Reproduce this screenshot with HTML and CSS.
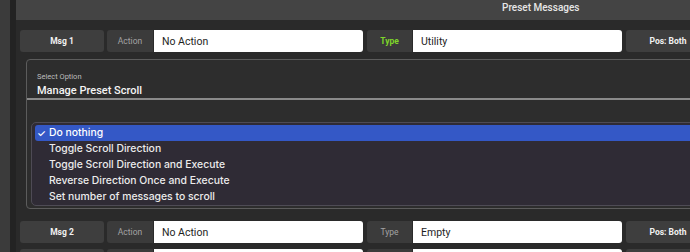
FILE: index.html
```html
<!DOCTYPE html>
<html lang="en">
<head>
  <meta charset="UTF-8">
  <meta name="viewport" content="width=device-width, initial-scale=1.0">
  <title>Preset Messages</title>
  <link rel="stylesheet" href="styles.css">
</head>
<body>

  <div class="sidebar"></div>
  <div class="divider"></div>

  <div class="main">
    <div class="header">Preset Messages</div>

    <div class="row">
      <div class="msg">Msg 1</div>
      <div class="label">Action</div>
      <div class="field">No Action</div>
      <div class="label type-active">Type</div>
      <div class="field">Utility</div>
      <div class="pos">Pos: Both</div>
    </div>

    <div class="panel">
      <div class="select">
        <div class="select-label">Select Option</div>
        <div class="select-value">Manage Preset Scroll</div>
      </div>

      <ul class="menu">
        <li class="selected"><span class="check">✓</span>Do nothing</li>
        <li>Toggle Scroll Direction</li>
        <li>Toggle Scroll Direction and Execute</li>
        <li>Reverse Direction Once and Execute</li>
        <li>Set number of messages to scroll</li>
      </ul>
    </div>

    <div class="row row-after">
      <div class="msg">Msg 2</div>
      <div class="label">Action</div>
      <div class="field">No Action</div>
      <div class="label">Type</div>
      <div class="field">Empty</div>
      <div class="pos">Pos: Both</div>
    </div>

    <!-- próxima linha, só o topo aparece -->
    <div class="row row-next">
      <div class="msg"></div>
      <div class="label"></div>
      <div class="field"></div>
      <div class="label"></div>
      <div class="field"></div>
      <div class="pos"></div>
    </div>
  </div>

</body>
</html>
```

FILE: styles.css
```css
body {
  margin: 0;
  height: 252px;
  display: flex;
  overflow: hidden;
  background-color: #2a2a2a;
  font-family: Roboto, "Liberation Sans", sans-serif;
  color: #fff;
}

.sidebar {
  width: 10px;
  flex-shrink: 0;
  background-color: #3b3b3b;
}

.divider {
  width: 6px;
  flex-shrink: 0;
  background-color: #232323;
}

.main {
  flex: 1;
  min-width: 0;
  overflow: hidden;
}

.header {
  height: 20px;
  box-sizing: border-box;
  padding: 2px 0 0 486px;
  background-color: #444;
  color: #e6e6e6;
  font-size: 10px;
  font-weight: 500;
  white-space: nowrap;
}

/* linha de mensagem */
.row {
  display: flex;
  height: 22px;
  margin: 10px 0 0 4px;
  white-space: nowrap;
}

.row-after {
  margin-top: 12px;
}

.row-next {
  margin-top: 6px;
}

.msg, .pos {
  width: 84px;
  flex-shrink: 0;
  display: flex;
  align-items: center;
  justify-content: center;
  background-color: #3e3e3e;
  border-radius: 3px;
  font-size: 8.5px;
  font-weight: 700;
  color: #f2f2f2;
}

.msg {
  margin-right: 3px;
}

.pos {
  margin-left: 4px;
}

.label {
  width: 46px;
  flex-shrink: 0;
  display: flex;
  align-items: center;
  justify-content: center;
  background-color: #3b3b3b;
  border-radius: 3px 0 0 3px;
  font-size: 8.5px;
  color: #a3a3a3;
  margin-right: 1px;
}

.label.type-active {
  color: #7fd62a;
  font-weight: 700;
}

.row .label:nth-child(4) {
  width: 45px;
  margin-left: 4px;
}

.field {
  width: 201px;
  flex-shrink: 0;
  display: flex;
  align-items: center;
  padding-left: 8px;
  background-color: #fff;
  border-radius: 0 3px 3px 0;
  color: #1e1e1e;
  font-size: 10.5px;
}

/* painel do select */
.panel {
  margin: 7px 0 0 10px;
  width: 700px;
  height: 150px;
  box-sizing: border-box;
  background-color: #2d2d2d;
  border: 1px solid #5c5c5c;
  border-radius: 4px;
}

.select {
  padding: 12px 0 0 10px;
  height: 40px;
  box-sizing: border-box;
  border-bottom: 2px solid #8a8a8a;
}

.select-label {
  font-size: 7.5px;
  color: #bdbdbd;
  line-height: 9px;
}

.select-value {
  font-size: 11px;
  font-weight: 500;
  color: #f4f4f4;
  margin-top: 3px;
  line-height: 13px;
}

.menu {
  list-style: none;
  margin: 22px 0 0 4px;
  padding: 2px 3px;
  height: 84px;
  box-sizing: border-box;
  background-color: #2f2b35;
  border: 1px solid #4e4b55;
  border-radius: 5px;
  font-family: Inter, "Noto Sans", sans-serif;
  font-size: 10.4px;
  font-weight: 500;
  color: #ececec;
}

.menu li {
  height: 16px;
  line-height: 16px;
  padding-left: 14px;
  border-radius: 3px;
  position: relative;
  white-space: nowrap;
}

.menu li.selected {
  background-color: #3458c6;
  color: #fff;
}

.check {
  position: absolute;
  left: 2px;
  font-size: 10px;
}
```
